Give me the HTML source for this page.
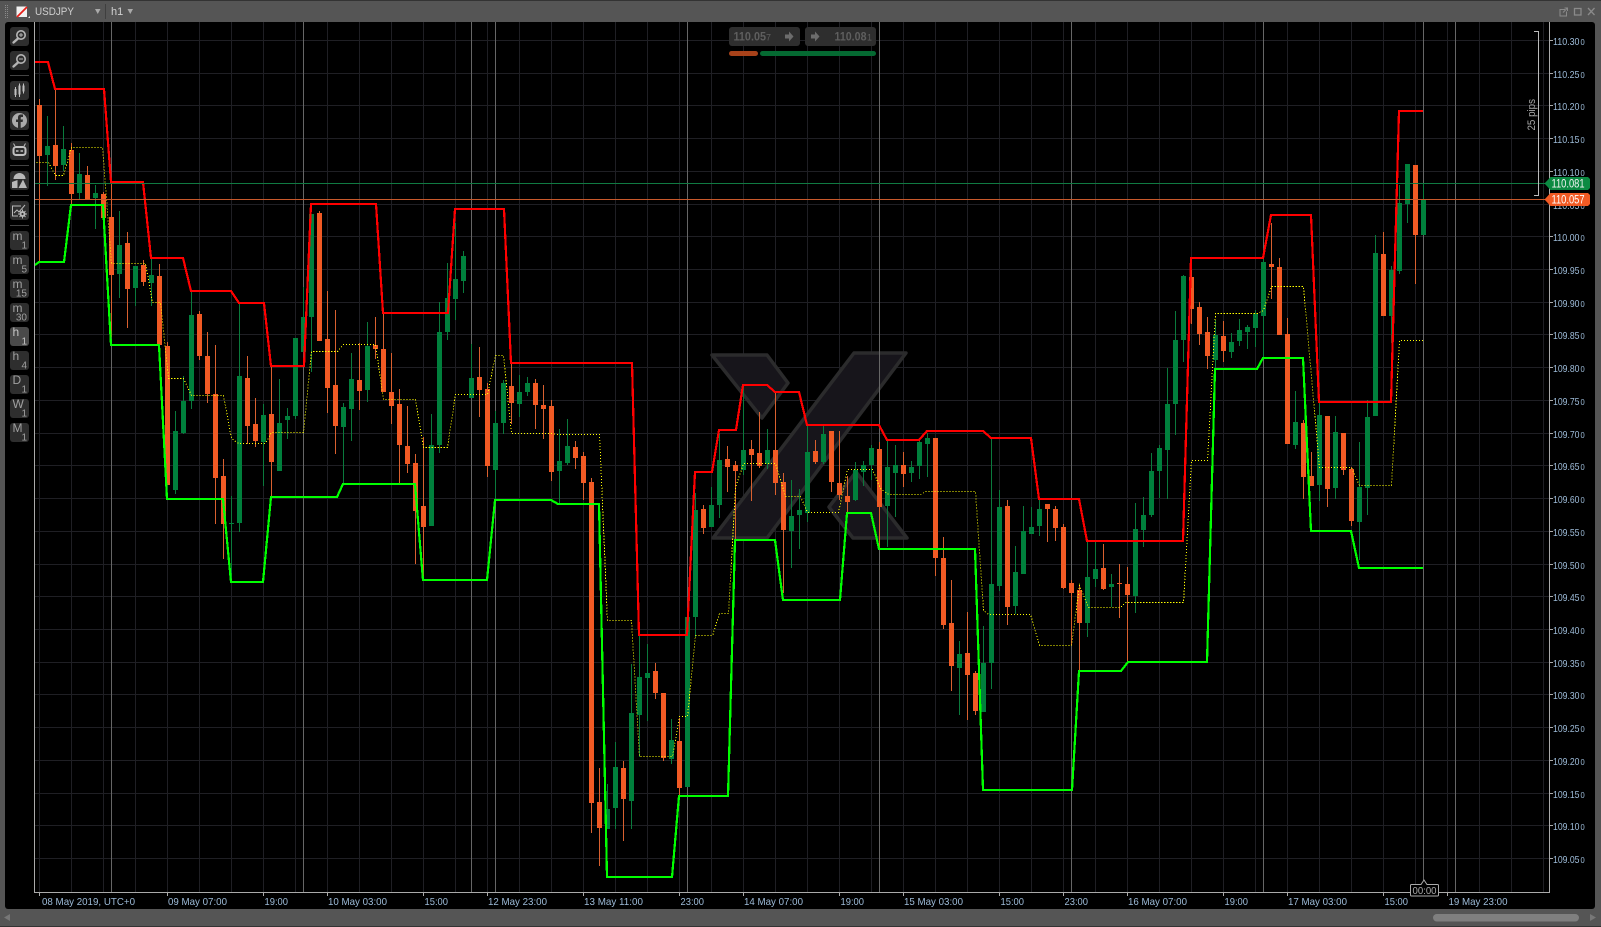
<!DOCTYPE html>
<html><head><meta charset="utf-8"><title>USDJPY h1</title>
<style>
html,body{margin:0;padding:0;background:#555;width:1601px;height:927px;overflow:hidden}
svg{position:absolute;left:0;top:0;display:block}
text{font-family:"Liberation Sans",sans-serif}
.p{font-size:10.5px;fill:#9dbbd8}
.s{font-size:8px;fill:#9dbbd8}
.d{font-size:10.5px;fill:#9dbbd8}
.b{font-size:12px;fill:#a0a0a0}
.n{font-size:10px;fill:#a0a0a0}
</style></head><body>
<svg width="1601" height="927" viewBox="0 0 1601 927" xmlns="http://www.w3.org/2000/svg">
<rect width="1601" height="927" fill="#555"/>
<rect x="0" y="0" width="1601" height="1" fill="#333"/>
<rect x="0" y="926" width="1601" height="1" fill="#333"/>
<rect x="5" y="22" width="1590" height="887" rx="3" fill="#000"/>

<!-- grid -->
<path shape-rendering="crispEdges" fill="none" stroke="#1f1f24" stroke-width="1" d="M39.5 22V892M71.5 22V892M103.5 22V892M135.5 22V892M167.5 22V892M199.5 22V892M231.5 22V892M263.5 22V892M295.5 22V892M327.5 22V892M359.5 22V892M391.5 22V892M423.5 22V892M455.5 22V892M487.5 22V892M519.5 22V892M551.5 22V892M583.5 22V892M615.5 22V892M647.5 22V892M679.5 22V892M711.5 22V892M743.5 22V892M775.5 22V892M807.5 22V892M839.5 22V892M871.5 22V892M903.5 22V892M935.5 22V892M967.5 22V892M999.5 22V892M1031.5 22V892M1063.5 22V892M1095.5 22V892M1127.5 22V892M1159.5 22V892M1191.5 22V892M1223.5 22V892M1255.5 22V892M1287.5 22V892M1319.5 22V892M1351.5 22V892M1383.5 22V892M1415.5 22V892M1447.5 22V892M1479.5 22V892M1511.5 22V892M1543.5 22V892M35 40.5H1549M35 73.5H1549M35 105.5H1549M35 138.5H1549M35 171.5H1549M35 204.5H1549M35 236.5H1549M35 269.5H1549M35 302.5H1549M35 334.5H1549M35 367.5H1549M35 400.5H1549M35 433.5H1549M35 465.5H1549M35 498.5H1549M35 531.5H1549M35 564.5H1549M35 596.5H1549M35 629.5H1549M35 662.5H1549M35 694.5H1549M35 727.5H1549M35 760.5H1549M35 793.5H1549M35 825.5H1549M35 858.5H1549"/>

<!-- watermark -->
<g fill="#17151b" stroke="#2b2b2c" stroke-width="3.5" stroke-linejoin="round">
<polygon points="712,355 767,355 788,383 762,418"/>
<polygon points="854,353 906,353 767,538 713,538"/>
<polygon points="829,507 856,472 907,538 853,538"/>
</g>

<!-- day separators -->
<path shape-rendering="crispEdges" fill="none" stroke="#666" stroke-width="1" d="M111.5 22V892M303.5 22V892M471.5 22V892M495.5 22V892M687.5 22V892M879.5 22V892M1071.5 22V892M1263.5 22V892M1423.5 22V880M1455.5 22V892"/>

<!-- orange candles -->
<path shape-rendering="crispEdges" fill="none" stroke="#d9602f" stroke-width="1" d="M39.5 99V262M55.5 89V180M71.5 143V205M87.5 166V199M103.5 192V229M111.5 182V337M127.5 232V328M143.5 260V286M159.5 264V345M167.5 342V485M199.5 311V360M207.5 332V403M215.5 345V524M223.5 459V559M247.5 356V444M255.5 398V447M271.5 366V497M319.5 211V341M327.5 291V413M335.5 310V454M359.5 343V410M375.5 317V359M383.5 313V392M391.5 353V424M399.5 389V483M407.5 406V473M415.5 454V564M423.5 437V580M479.5 347V417M487.5 383V477M511.5 364V424M535.5 379V429M543.5 385V439M551.5 400V481M575.5 441V469M583.5 452V500M591.5 478V833M599.5 768V866M623.5 761V841M655.5 663V699M663.5 693V761M679.5 718V796M703.5 505V534M727.5 446V492M735.5 461V541M751.5 440V501M759.5 412V468M775.5 392V495M783.5 473V593M815.5 440V464M831.5 431V492M839.5 431V500M847.5 476V513M879.5 442V549M903.5 452V487M935.5 438V576M943.5 537V629M951.5 580V691M967.5 612V720M975.5 671V715M1007.5 500V625M1047.5 504V542M1055.5 506V541M1063.5 524V589M1071.5 580V645M1079.5 586V671M1103.5 544V590M1119.5 564V618M1127.5 567V662M1191.5 260V324M1199.5 302V345M1207.5 317V369M1223.5 321V362M1271.5 223V299M1279.5 258V335M1287.5 318V444M1303.5 420V499M1311.5 452V486M1327.5 416V507M1343.5 433V475M1351.5 467V526M1383.5 232V316M1415.5 165V284"/>
<path shape-rendering="crispEdges" fill="none" stroke="#f15a24" stroke-width="5" d="M39.5 105V156M55.5 145V166M71.5 150V194M87.5 175V199M103.5 194V218M111.5 217V275M127.5 243V289M143.5 265V282M159.5 276V345M167.5 346V485M199.5 314V356M207.5 356V394M215.5 394V478M223.5 476V524M247.5 378V426M255.5 424V441M271.5 414V462M319.5 213V341M327.5 339V388M335.5 385V426M359.5 380V391M375.5 345V349M383.5 349V392M391.5 392V406M399.5 404V445M407.5 446V464M415.5 463V511M423.5 506V527M479.5 377V390M487.5 389V466M511.5 386V403M535.5 383V405M543.5 405V409M551.5 406V472M575.5 447V458M583.5 456V483M591.5 482V803M599.5 802V828M623.5 768V799M655.5 671V693M663.5 693V758M679.5 741V788M703.5 509V528M727.5 459V467M735.5 465V471M751.5 449V455M759.5 453V466M775.5 450V483M783.5 482V530M815.5 451V462M831.5 431V482M839.5 483V495M847.5 496V502M879.5 449V507M903.5 465V474M935.5 438V558M943.5 558V625M951.5 623V666M967.5 653V675M975.5 673V711M1007.5 506V607M1047.5 504V509M1055.5 509V528M1063.5 527V588M1071.5 583V593M1079.5 590V623M1103.5 568V589M1119.5 583V584M1127.5 584V595M1191.5 277V309M1199.5 307V334M1207.5 332V356M1223.5 336V351M1271.5 264V267M1279.5 267V335M1287.5 334V444M1303.5 423V477M1311.5 476V486M1327.5 416V489M1343.5 433V470M1351.5 469V521M1383.5 254V316M1415.5 165V235"/>

<!-- green candles -->
<path shape-rendering="crispEdges" fill="none" stroke="#0a7a3c" stroke-width="1" d="M47.5 116V186M63.5 126V171M79.5 153V200M95.5 185V229M119.5 211V298M135.5 266V306M151.5 257V306M175.5 411V494M183.5 376V434M191.5 290V409M231.5 496V582M239.5 304V532M263.5 404V486M279.5 379V471M287.5 408V439M295.5 338V419M303.5 287V352M311.5 214V372M343.5 403V484M351.5 353V441M367.5 322V402M431.5 414V526M439.5 302V453M447.5 263V340M455.5 223V320M463.5 251V293M471.5 344V398M495.5 411V500M503.5 380V434M519.5 375V417M527.5 377V396M559.5 429V504M567.5 419V465M607.5 784V829M615.5 742V829M631.5 664V829M639.5 635V757M647.5 644V721M671.5 719V764M687.5 617V787M695.5 493V637M711.5 487V527M719.5 433V518M743.5 385V475M767.5 429V469M791.5 480V568M799.5 489V549M807.5 425V522M823.5 426V464M855.5 462V501M863.5 461V486M871.5 445V480M887.5 441V547M895.5 445V517M911.5 461V482M919.5 440V479M927.5 433V477M959.5 641V715M983.5 626V712M991.5 439V689M999.5 490V591M1015.5 546V614M1023.5 506V574M1031.5 507V534M1039.5 499V536M1087.5 541V637M1095.5 542V587M1111.5 574V607M1135.5 503V613M1143.5 497V547M1151.5 453V517M1159.5 445V498M1167.5 368V499M1175.5 311V435M1183.5 275V362M1215.5 320V370M1231.5 333V358M1239.5 319V346M1247.5 325V349M1255.5 310V347M1263.5 250V358M1295.5 391V449M1319.5 403V501M1335.5 416V499M1359.5 442V560M1367.5 400V515M1375.5 235V416M1391.5 266V343M1399.5 185V274M1407.5 164V223M1423.5 183V235"/>
<path shape-rendering="crispEdges" fill="none" stroke="#00803c" stroke-width="5" d="M47.5 146V155M63.5 149V165M79.5 174V193M95.5 193V198M119.5 245V274M135.5 266V288M151.5 275V283M175.5 431V490M183.5 401V433M191.5 315V401M231.5 523V524M239.5 376V523M263.5 415V442M279.5 423V471M287.5 416V420M295.5 338V416M303.5 317V352M311.5 214V317M343.5 407V427M351.5 379V409M367.5 346V390M431.5 445V526M439.5 332V445M447.5 298V332M455.5 279V299M463.5 256V281M471.5 378V398M495.5 423V470M503.5 383V423M519.5 392V404M527.5 383V392M559.5 461V471M567.5 446V463M607.5 809V829M615.5 767V808M631.5 713V801M639.5 677V715M647.5 673V678M671.5 740V759M687.5 617V787M695.5 510V617M711.5 505V527M719.5 460V505M743.5 450V470M767.5 450V464M791.5 516V531M799.5 510V515M807.5 452V513M823.5 434V462M855.5 470V500M863.5 465V472M871.5 448V465M887.5 467V506M895.5 465V473M911.5 467V473M919.5 442V466M927.5 438V444M959.5 654V668M983.5 663V712M991.5 584V663M999.5 507V586M1015.5 572V606M1023.5 531V574M1031.5 527V534M1039.5 509V526M1087.5 577V623M1095.5 569V579M1111.5 584V587M1135.5 529V596M1143.5 515V530M1151.5 471V515M1159.5 448V471M1167.5 404V450M1175.5 340V404M1183.5 276V340M1215.5 335V360M1231.5 342V352M1239.5 330V341M1247.5 327V332M1255.5 314V328M1263.5 262V316M1295.5 422V445M1319.5 415V485M1335.5 432V488M1359.5 487V522M1367.5 417V488M1375.5 253V416M1391.5 270V316M1399.5 203V271M1407.5 164V204M1423.5 200V235"/>

<!-- indicators -->
<path transform="translate(.5 .5)" shape-rendering="crispEdges" fill="none" stroke="#ffff00" stroke-width="1" stroke-dasharray="1.1 1.9" d="M36 162H48L55 175H63L71 147H102L111 263H145L152 302H160L168 378H183L191 395H223L231 438L238 443H265L271 432H303L311 351H337L343 344H375L383 399H415L423 447H447L455 394H487L495 355H503L511 433H551L558 434H599L607 620H631L639 756H672L679 716H687L695 635H712L719 613H728L735 487L743 463H775L785 496H800L807 512H838L847 469H872L880 488L888 494H920L925 491H975L983 610L988 614H1030L1039 645H1071L1079 585L1088 607H1120L1125 602H1183L1191 460H1207L1215 313H1257L1263 310L1271 286H1303L1319 467H1351L1359 485H1391L1399 340H1423"/>
<path shape-rendering="crispEdges" fill="none" stroke="#ff0000" stroke-width="2.2" d="M35 62H48L55 89H104L111 182H143L151 258H183L191 291H231L239 303H264L271 366H304L311 204H376L383 313H448L455 209H504L511 363H632L639 635H687L695 472H712L719 430H736L743 385H767L775 392H799L807 425H879L887 440H919L927 431H983L991 438H1031L1039 499H1079L1087 541H1183L1191 258H1263L1271 215H1311L1319 402H1391L1399 111H1423"/>
<path shape-rendering="crispEdges" fill="none" stroke="#00ff00" stroke-width="2.2" d="M35 265L39 262H64L71 205H103L111 345H159L167 499H223L231 582H263L271 497H337L343 484H415L423 580H487L495 500H551L558 504H599L607 877H672L679 796H728L735 540H775L783 600H840L847 513H871L879 549H975L983 790H1072L1079 671H1121L1128 662H1207L1215 369H1257L1263 358H1303L1311 531H1351L1359 568H1423"/>

<!-- price lines -->
<path shape-rendering="crispEdges" fill="none" stroke="#107a42" stroke-width="1" d="M35 183.5H1546"/>
<path shape-rendering="crispEdges" fill="none" stroke="#c8592c" stroke-width="1" d="M35 199.5H1546"/>

<!-- axes -->
<path shape-rendering="crispEdges" fill="none" stroke="#aaa" stroke-width="1" d="M34.5 22V893M1549.5 22V893M34 892.5H1550"/>
<path shape-rendering="crispEdges" fill="none" stroke="#aaa" stroke-width="1" d="M1550 40.5h3M1550 73.5h3M1550 105.5h3M1550 138.5h3M1550 171.5h3M1550 204.5h3M1550 236.5h3M1550 269.5h3M1550 302.5h3M1550 334.5h3M1550 367.5h3M1550 400.5h3M1550 433.5h3M1550 465.5h3M1550 498.5h3M1550 531.5h3M1550 564.5h3M1550 596.5h3M1550 629.5h3M1550 662.5h3M1550 694.5h3M1550 727.5h3M1550 760.5h3M1550 793.5h3M1550 825.5h3M1550 858.5h3M39.5 893v3M167.5 893v3M263.5 893v3M327.5 893v3M423.5 893v3M487.5 893v3M583.5 893v3M679.5 893v3M743.5 893v3M839.5 893v3M903.5 893v3M999.5 893v3M1063.5 893v3M1127.5 893v3M1223.5 893v3M1287.5 893v3M1383.5 893v3M1447.5 893v3"/>

<!-- price labels -->
<g>
<text class="p" x="1553" y="45" textLength="26.5" lengthAdjust="spacingAndGlyphs">110.30</text><text class="s" x="1580.5" y="45" textLength="4.2" lengthAdjust="spacingAndGlyphs">0</text>
<text class="p" x="1553" y="78" textLength="26.5" lengthAdjust="spacingAndGlyphs">110.25</text><text class="s" x="1580.5" y="78" textLength="4.2" lengthAdjust="spacingAndGlyphs">0</text>
<text class="p" x="1553" y="110" textLength="26.5" lengthAdjust="spacingAndGlyphs">110.20</text><text class="s" x="1580.5" y="110" textLength="4.2" lengthAdjust="spacingAndGlyphs">0</text>
<text class="p" x="1553" y="143" textLength="26.5" lengthAdjust="spacingAndGlyphs">110.15</text><text class="s" x="1580.5" y="143" textLength="4.2" lengthAdjust="spacingAndGlyphs">0</text>
<text class="p" x="1553" y="176" textLength="26.5" lengthAdjust="spacingAndGlyphs">110.10</text><text class="s" x="1580.5" y="176" textLength="4.2" lengthAdjust="spacingAndGlyphs">0</text>
<text class="p" x="1553" y="209" textLength="26.5" lengthAdjust="spacingAndGlyphs">110.05</text><text class="s" x="1580.5" y="209" textLength="4.2" lengthAdjust="spacingAndGlyphs">0</text>
<text class="p" x="1553" y="241" textLength="26.5" lengthAdjust="spacingAndGlyphs">110.00</text><text class="s" x="1580.5" y="241" textLength="4.2" lengthAdjust="spacingAndGlyphs">0</text>
<text class="p" x="1553" y="274" textLength="26.5" lengthAdjust="spacingAndGlyphs">109.95</text><text class="s" x="1580.5" y="274" textLength="4.2" lengthAdjust="spacingAndGlyphs">0</text>
<text class="p" x="1553" y="307" textLength="26.5" lengthAdjust="spacingAndGlyphs">109.90</text><text class="s" x="1580.5" y="307" textLength="4.2" lengthAdjust="spacingAndGlyphs">0</text>
<text class="p" x="1553" y="339" textLength="26.5" lengthAdjust="spacingAndGlyphs">109.85</text><text class="s" x="1580.5" y="339" textLength="4.2" lengthAdjust="spacingAndGlyphs">0</text>
<text class="p" x="1553" y="372" textLength="26.5" lengthAdjust="spacingAndGlyphs">109.80</text><text class="s" x="1580.5" y="372" textLength="4.2" lengthAdjust="spacingAndGlyphs">0</text>
<text class="p" x="1553" y="405" textLength="26.5" lengthAdjust="spacingAndGlyphs">109.75</text><text class="s" x="1580.5" y="405" textLength="4.2" lengthAdjust="spacingAndGlyphs">0</text>
<text class="p" x="1553" y="438" textLength="26.5" lengthAdjust="spacingAndGlyphs">109.70</text><text class="s" x="1580.5" y="438" textLength="4.2" lengthAdjust="spacingAndGlyphs">0</text>
<text class="p" x="1553" y="470" textLength="26.5" lengthAdjust="spacingAndGlyphs">109.65</text><text class="s" x="1580.5" y="470" textLength="4.2" lengthAdjust="spacingAndGlyphs">0</text>
<text class="p" x="1553" y="503" textLength="26.5" lengthAdjust="spacingAndGlyphs">109.60</text><text class="s" x="1580.5" y="503" textLength="4.2" lengthAdjust="spacingAndGlyphs">0</text>
<text class="p" x="1553" y="536" textLength="26.5" lengthAdjust="spacingAndGlyphs">109.55</text><text class="s" x="1580.5" y="536" textLength="4.2" lengthAdjust="spacingAndGlyphs">0</text>
<text class="p" x="1553" y="569" textLength="26.5" lengthAdjust="spacingAndGlyphs">109.50</text><text class="s" x="1580.5" y="569" textLength="4.2" lengthAdjust="spacingAndGlyphs">0</text>
<text class="p" x="1553" y="601" textLength="26.5" lengthAdjust="spacingAndGlyphs">109.45</text><text class="s" x="1580.5" y="601" textLength="4.2" lengthAdjust="spacingAndGlyphs">0</text>
<text class="p" x="1553" y="634" textLength="26.5" lengthAdjust="spacingAndGlyphs">109.40</text><text class="s" x="1580.5" y="634" textLength="4.2" lengthAdjust="spacingAndGlyphs">0</text>
<text class="p" x="1553" y="667" textLength="26.5" lengthAdjust="spacingAndGlyphs">109.35</text><text class="s" x="1580.5" y="667" textLength="4.2" lengthAdjust="spacingAndGlyphs">0</text>
<text class="p" x="1553" y="699" textLength="26.5" lengthAdjust="spacingAndGlyphs">109.30</text><text class="s" x="1580.5" y="699" textLength="4.2" lengthAdjust="spacingAndGlyphs">0</text>
<text class="p" x="1553" y="732" textLength="26.5" lengthAdjust="spacingAndGlyphs">109.25</text><text class="s" x="1580.5" y="732" textLength="4.2" lengthAdjust="spacingAndGlyphs">0</text>
<text class="p" x="1553" y="765" textLength="26.5" lengthAdjust="spacingAndGlyphs">109.20</text><text class="s" x="1580.5" y="765" textLength="4.2" lengthAdjust="spacingAndGlyphs">0</text>
<text class="p" x="1553" y="798" textLength="26.5" lengthAdjust="spacingAndGlyphs">109.15</text><text class="s" x="1580.5" y="798" textLength="4.2" lengthAdjust="spacingAndGlyphs">0</text>
<text class="p" x="1553" y="830" textLength="26.5" lengthAdjust="spacingAndGlyphs">109.10</text><text class="s" x="1580.5" y="830" textLength="4.2" lengthAdjust="spacingAndGlyphs">0</text>
<text class="p" x="1553" y="863" textLength="26.5" lengthAdjust="spacingAndGlyphs">109.05</text><text class="s" x="1580.5" y="863" textLength="4.2" lengthAdjust="spacingAndGlyphs">0</text>
</g>

<!-- tags -->
<path d="M1544.5 183.5L1550.5 177H1588L1590 179V188L1588 190H1550.5Z" fill="#0b8a42"/>
<text x="1551.5" y="187.5" font-size="11.5" fill="#f4f4f4" textLength="33" lengthAdjust="spacingAndGlyphs">110.081</text>
<path d="M1544.5 199.500L1550.5 193H1588L1590 195V204L1588 206H1550.5Z" fill="#f15a24"/>
<text x="1551.5" y="203.500" font-size="11.5" fill="#ffffff" textLength="33" lengthAdjust="spacingAndGlyphs">110.057</text>

<!-- bracket -->
<path shape-rendering="crispEdges" fill="none" stroke="#bbb" stroke-width="1" d="M1534 31.5H1538.5V195.5H1534"/>
<text transform="translate(1535,130.500) rotate(-90)" font-size="11" fill="#a8a8a8" textLength="31.500" lengthAdjust="spacingAndGlyphs" x="0" y="0">25 pips</text>

<!-- date labels -->
<text class="d" x="42" y="905" textLength="93" lengthAdjust="spacingAndGlyphs">08 May 2019, UTC+0</text>
<text class="d" x="168" y="905" textLength="59" lengthAdjust="spacingAndGlyphs">09 May 07:00</text>
<text class="d" x="264.5" y="905" textLength="23.5" lengthAdjust="spacingAndGlyphs">19:00</text>
<text class="d" x="328" y="905" textLength="59" lengthAdjust="spacingAndGlyphs">10 May 03:00</text>
<text class="d" x="424.5" y="905" textLength="23.5" lengthAdjust="spacingAndGlyphs">15:00</text>
<text class="d" x="488" y="905" textLength="59" lengthAdjust="spacingAndGlyphs">12 May 23:00</text>
<text class="d" x="584" y="905" textLength="59" lengthAdjust="spacingAndGlyphs">13 May 11:00</text>
<text class="d" x="680.5" y="905" textLength="23.5" lengthAdjust="spacingAndGlyphs">23:00</text>
<text class="d" x="744" y="905" textLength="59" lengthAdjust="spacingAndGlyphs">14 May 07:00</text>
<text class="d" x="840.5" y="905" textLength="23.5" lengthAdjust="spacingAndGlyphs">19:00</text>
<text class="d" x="904" y="905" textLength="59" lengthAdjust="spacingAndGlyphs">15 May 03:00</text>
<text class="d" x="1000.5" y="905" textLength="23.5" lengthAdjust="spacingAndGlyphs">15:00</text>
<text class="d" x="1064.5" y="905" textLength="23.5" lengthAdjust="spacingAndGlyphs">23:00</text>
<text class="d" x="1128" y="905" textLength="59" lengthAdjust="spacingAndGlyphs">16 May 07:00</text>
<text class="d" x="1224.5" y="905" textLength="23.5" lengthAdjust="spacingAndGlyphs">19:00</text>
<text class="d" x="1288" y="905" textLength="59" lengthAdjust="spacingAndGlyphs">17 May 03:00</text>
<text class="d" x="1384.5" y="905" textLength="23.5" lengthAdjust="spacingAndGlyphs">15:00</text>
<text class="d" x="1448.5" y="905" textLength="59" lengthAdjust="spacingAndGlyphs">19 May 23:00</text>

<!-- countdown -->
<path d="M1411.5 884.5H1421L1424 880L1427 884.5H1437.5Q1438.5 884.5 1438.5 885.5V895Q1438.5 896 1437.5 896H1411.5Q1410.5 896 1410.5 895V885.5Q1410.5 884.5 1411.5 884.5Z" fill="#000" stroke="#aaa" stroke-width="1"/>
<text x="1412.5" y="894" font-size="10.5" fill="#aaa" textLength="24" lengthAdjust="spacingAndGlyphs">00:00</text>

<!-- quick trade -->
<rect x="729" y="27" width="71" height="19" rx="3" fill="#2e2e2e"/>
<rect x="805" y="27" width="71" height="19" rx="3" fill="#2e2e2e"/>
<text x="733.5" y="40.5" font-size="12" font-weight="bold" fill="#5e5e5e" textLength="32.5" lengthAdjust="spacingAndGlyphs">110.05</text>
<text x="766" y="40.5" font-size="9" fill="#5e5e5e">7</text>
<path d="M785 34.5h4v-3l4.5 5 -4.5 5v-3h-4z" fill="#6c6c6c"/>
<path d="M811 34.5h4v-3l4.5 5 -4.5 5v-3h-4z" fill="#6c6c6c"/>
<text x="834.5" y="40.5" font-size="12" font-weight="bold" fill="#5e5e5e" textLength="32" lengthAdjust="spacingAndGlyphs">110.08</text>
<text x="867" y="40.5" font-size="9" fill="#5e5e5e">1</text>
<rect x="729" y="51" width="29" height="5" rx="2.5" fill="#a8421a"/>
<rect x="760" y="51" width="116" height="5" rx="2.5" fill="#056a32"/>

<!-- left toolbar -->
<g fill="#2e2e2e">
<rect x="10" y="27" width="19" height="19" rx="3"/>
<rect x="10" y="51" width="19" height="19" rx="3"/>
<rect x="10" y="81" width="19" height="19" rx="3"/>
<rect x="10" y="111" width="19" height="19" rx="3"/>
<rect x="10" y="141" width="19" height="19" rx="3"/>
<rect x="10" y="171" width="19" height="19" rx="3"/>
<rect x="10" y="201" width="19" height="19" rx="3"/>
<rect x="10" y="231" width="19" height="19" rx="3"/>
<rect x="10" y="255" width="19" height="19" rx="3"/>
<rect x="10" y="279" width="19" height="19" rx="3"/>
<rect x="10" y="303" width="19" height="19" rx="3"/>
<rect x="10" y="327" width="19" height="19" rx="3" fill="#4a4a4a"/>
<rect x="10" y="351" width="19" height="19" rx="3"/>
<rect x="10" y="375" width="19" height="19" rx="3"/>
<rect x="10" y="399" width="19" height="19" rx="3"/>
<rect x="10" y="423" width="19" height="19" rx="3"/>
</g>
<path shape-rendering="crispEdges" stroke="#444" stroke-width="1" d="M10 75.5H29M10 105.5H29M10 135.5H29M10 165.5H29M10 195.5H29M10 225.5H29"/>

<!-- zoom icons -->
<g fill="none" stroke="#b4b4b4">
<circle cx="21" cy="35" r="4.2" stroke-width="1.6"/><path d="M18 38.5L13.5 42.5" stroke-width="2.4" stroke-linecap="round"/><path d="M19 35h4M21 33v4" stroke-width="1"/>
<circle cx="21" cy="59" r="4.2" stroke-width="1.6"/><path d="M18 62.5L13.5 66.5" stroke-width="2.4" stroke-linecap="round"/><path d="M19 59h4" stroke-width="1"/>
</g>
<!-- candles icon -->
<g fill="#c0c0c0">
<rect x="14.5" y="89" width="2" height="6"/><rect x="18.5" y="85.5" width="2" height="9"/><rect x="22.5" y="85.5" width="2" height="6"/>
<path d="M15 87h1v10h-1zM19 83.500h1v13.500h-1zM23 83.500h1v10h-1z"/>
</g>
<!-- facebook icon -->
<circle cx="19.5" cy="120.5" r="7.5" fill="#aaa"/>
<path d="M18 128v-6h-2v-2.5h2v-2c0-2 1.2-3 3-3h2v2.500h-1.300c-.8 0-1 .4-1 1v1.500h2.300l-.4 2.500h-1.900v6z" fill="#2e2e2e"/>
<!-- robot icon -->
<g fill="none" stroke="#c0c0c0">
<rect x="13.5" y="147" width="12" height="8" rx="2.500" stroke-width="2"/>
<path d="M15 146L13.5 143.500M24 146L25.5 143.500" stroke-width="1"/>
<path d="M16 151h2.500M20.500 151h2.500" stroke-width="1.500"/>
</g>
<!-- shapes icon -->
<g fill="#b8b8b8">
<path d="M13.500 179a6 6 0 0 1 12 0z"/>
<path d="M12 182L17.500 180V188H12z"/>
<path d="M18.500 188L23 179.500L27 188z"/>
</g>
<!-- settings chart icon -->
<path d="M21 206H12.500V216H18" fill="none" stroke="#b8b8b8" stroke-width="1"/>
<path d="M14 213L17 210L19 212L25 205" fill="none" stroke="#b8b8b8" stroke-width="1"/>
<circle cx="22.500" cy="214" r="3" fill="#b8b8b8"/><circle cx="22.500" cy="214" r="1.100" fill="#2e2e2e"/>
<path d="M22.500 209.500v2M22.500 216.500v2M18 214h2M25 214h2M19.500 211l1.300 1.300M24.200 215.700l1.300 1.300M25.500 211l-1.300 1.300M20.800 215.700l-1.300 1.300" stroke="#b8b8b8" stroke-width="1"/>

<!-- timeframe labels -->
<text class="b" x="12.500" y="240">m</text><text class="n" x="27" y="248.500" text-anchor="end">1</text>
<text class="b" x="12.500" y="264">m</text><text class="n" x="27" y="272.500" text-anchor="end">5</text>
<text class="b" x="12.500" y="288">m</text><text class="n" x="27" y="296.500" text-anchor="end">15</text>
<text class="b" x="12.500" y="312">m</text><text class="n" x="27" y="320.500" text-anchor="end">30</text>
<text class="b" x="12.500" y="336" style="fill:#c4c4c4">h</text><text class="n" x="27" y="344.500" text-anchor="end" style="fill:#c4c4c4">1</text>
<text class="b" x="12.500" y="360">h</text><text class="n" x="27" y="368.500" text-anchor="end">4</text>
<text class="b" x="12.500" y="384">D</text><text class="n" x="27" y="392.500" text-anchor="end">1</text>
<text class="b" x="12.500" y="408">W</text><text class="n" x="27" y="416.500" text-anchor="end">1</text>
<text class="b" x="12.500" y="432">M</text><text class="n" x="27" y="440.500" text-anchor="end">1</text>

<!-- top bar -->
<path d="M5.500 5V18M7.500 5V18" stroke="#8a8a8a" stroke-width="1" stroke-dasharray="1 1" shape-rendering="crispEdges"/>
<rect x="16.500" y="6.500" width="10.500" height="10.500" fill="#f2f2f2"/>
<path d="M17 17L27 7" stroke="#e8201a" stroke-width="1.800"/>
<path d="M30 16v2h-2z" fill="#ddd"/>
<text x="35" y="15" font-size="11" fill="#cfcfcf" textLength="39" lengthAdjust="spacingAndGlyphs">USDJPY</text>
<path d="M95 9h5.500l-2.750 5z" fill="#aaa"/>
<path shape-rendering="crispEdges" d="M105.500 4V19" stroke="#3f3f3f"/>
<text x="111" y="15" font-size="11" fill="#cfcfcf">h1</text>
<path d="M127.500 9h5.500l-2.750 5z" fill="#aaa"/>
<!-- window buttons -->
<g fill="none" stroke="#8a8a8a" stroke-width="1" transform="translate(-.5 -.5)">
<path d="M1565.500 10H1560.500V16.500H1567V12"/><path d="M1563.500 13L1568 8.500M1565 8.500H1568V11.500"/>
<rect x="1575" y="9" width="6.500" height="6.500" stroke-width="1.300"/>
<path d="M1588.500 8.500L1595 15.500M1595 8.500L1588.500 15.500" stroke-width="1.300"/>
</g>

<!-- bottom bar -->
<rect x="1433" y="914" width="146" height="7.500" rx="3.700" fill="#7f7f7f"/>
<path d="M4 917.500L10 914V921z" fill="#777"/>
<path d="M1596 917.500L1590 914V921z" fill="#777"/>
</svg>
</body></html>
